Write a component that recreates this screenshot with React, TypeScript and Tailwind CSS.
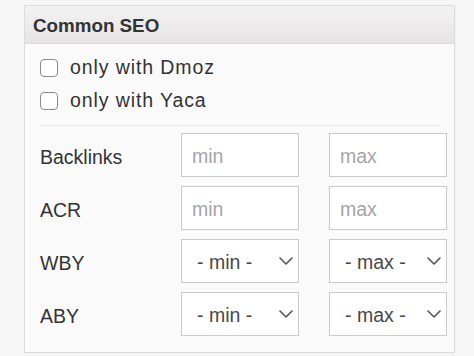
import React from 'react';

const font = { fontFamily: '"Liberation Sans", Arial, Helvetica, sans-serif' };

const Chevron: React.FC = () => (
    <svg
        className="pointer-events-none absolute right-[6px] top-1/2 -translate-y-1/2"
        width="14"
        height="8"
        viewBox="0 0 14 8"
        fill="none"
    >
        <path d="M1 1l6 6 6-6" stroke="#555" strokeWidth="1.6" strokeLinecap="round" strokeLinejoin="round" />
    </svg>
);

const Checkbox: React.FC<{ label: string }> = ({ label }) => (
    <label className="flex items-center gap-[12px] h-[33px] text-[19.5px] tracking-[0.9px] text-[#333]">
        <span className="w-[18px] h-[18px] rounded-[4px] border border-[#8c8c8c] bg-white shrink-0" />
        {label}
    </label>
);

const TextField: React.FC<{ placeholder: string }> = ({ placeholder }) => (
    <input
        type="text"
        placeholder={placeholder}
        className="w-[118px] h-[44px] border border-[#cccccc] bg-white px-[10px] pt-[3px] text-[19.5px] text-[#333] placeholder:text-[#a5a5a5] outline-none"
        style={font}
    />
);

const SelectField: React.FC<{ value: string }> = ({ value }) => (
    <div className="relative w-[118px] h-[44px]">
        <select
            className="appearance-none w-full h-full border border-[#cccccc] bg-white pl-[15px] pr-[24px] pt-[3px] text-[19.5px] text-[#484848] outline-none rounded-none"
            style={font}
            defaultValue={value}
        >
            <option>{value}</option>
        </select>
        <Chevron />
    </div>
);

const rows = [
    { label: 'Backlinks', kind: 'input' },
    { label: 'ACR', kind: 'input' },
    { label: 'WBY', kind: 'select' },
    { label: 'ABY', kind: 'select' },
];

export default function App() {
    return (
        <div className="min-h-screen bg-[#f6f6f6] pt-[5px] pl-[24px]" style={font}>
            <div className="w-[431px] h-[348px] border border-[#dcdcdc] bg-[#fafafa] shadow-[1px_1px_2px_rgba(0,0,0,0.04)]">
                {/* Header */}
                <div className="h-[38px] flex items-center pt-[3px] px-[8px] border-b border-[#dcdcdc] bg-gradient-to-b from-[#f3f2f2] to-[#e6e4e4]">
                    <h2 className="text-[18.8px] font-bold text-[#333]">Common SEO</h2>
                </div>

                <div className="pl-[15px] pr-[14px] pt-[7px]">
                    <Checkbox label="only with Dmoz" />
                    <Checkbox label="only with Yaca" />

                    <div className="mt-[8px] border-t border-[#e8e8e8]" />

                    <div className="grid grid-cols-[111px_118px_118px] gap-x-[30px] gap-y-[9px] pt-[7px]">
                        {rows.map((row) => (
                            <React.Fragment key={row.label}>
                                <div className="flex items-center h-[44px] pt-[6px] text-[19.5px] text-[#333]">{row.label}</div>
                                {row.kind === 'input' ? (
                                    <>
                                        <TextField placeholder="min" />
                                        <TextField placeholder="max" />
                                    </>
                                ) : (
                                    <>
                                        <SelectField value="- min -" />
                                        <SelectField value="- max -" />
                                    </>
                                )}
                            </React.Fragment>
                        ))}
                    </div>
                </div>
            </div>
        </div>
    );
}
